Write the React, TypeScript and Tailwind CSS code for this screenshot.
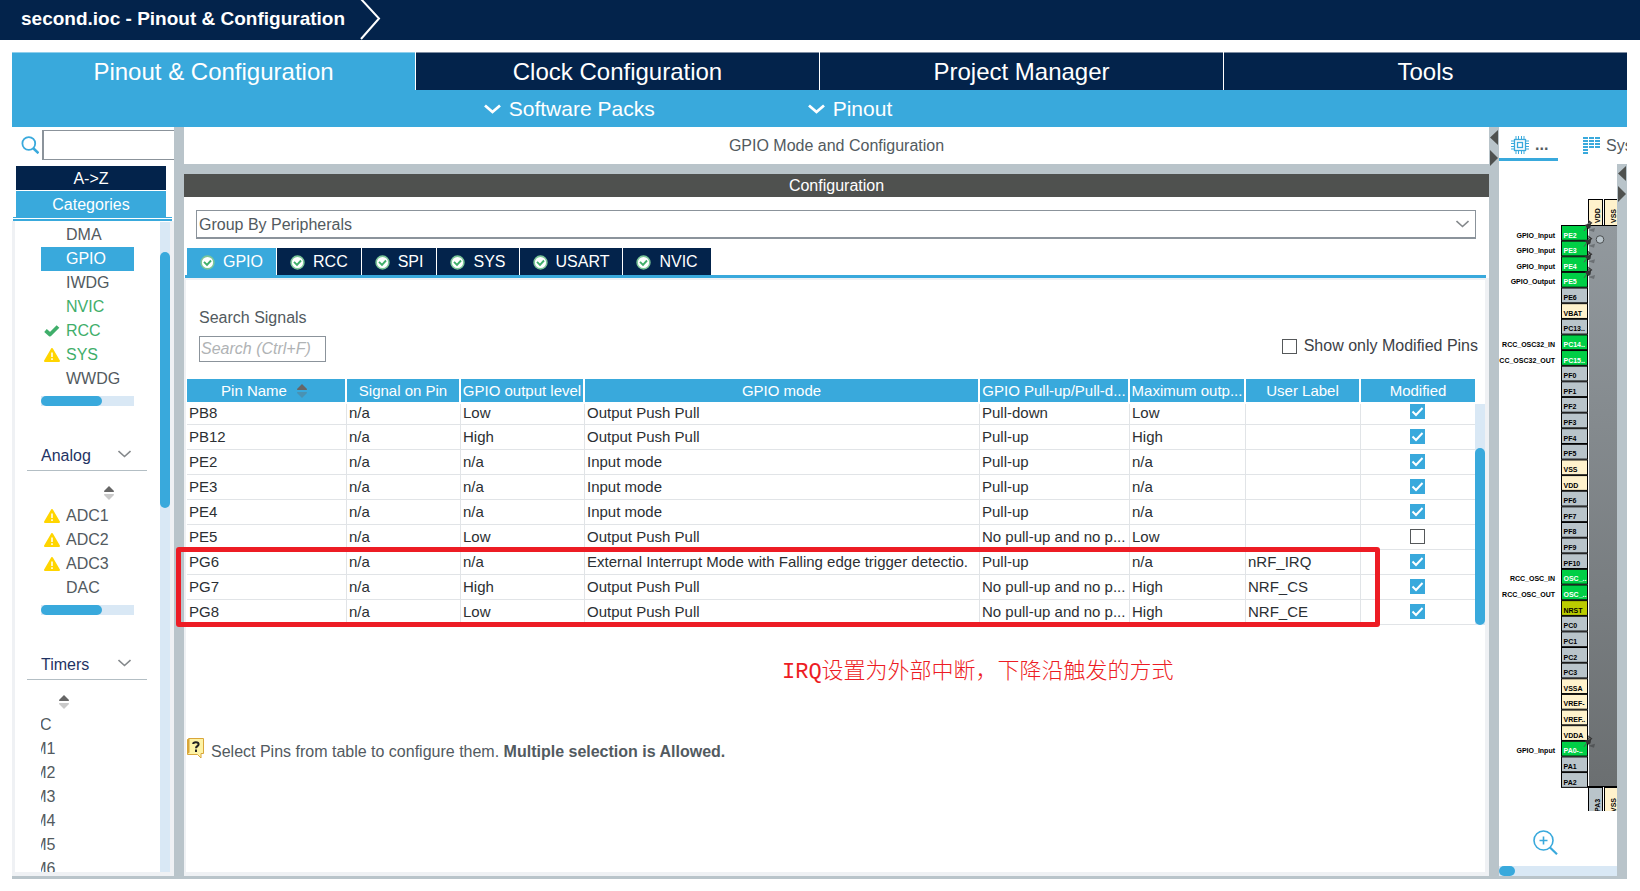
import React from 'react';

type Status = 'ok' | 'warn' | null;

interface Peripheral {
  name: string;
  status?: Status;
  color?: string;
  selected?: boolean;
}

const systemCore: Peripheral[] = [
  { name: 'DMA' },
  { name: 'GPIO', selected: true },
  { name: 'IWDG' },
  { name: 'NVIC', color: 'text-[#3fae6a]' },
  { name: 'RCC', status: 'ok', color: 'text-[#3fae6a]' },
  { name: 'SYS', status: 'warn', color: 'text-[#3fae6a]' },
  { name: 'WWDG' },
];

const analog: Peripheral[] = [
  { name: 'ADC1', status: 'warn' },
  { name: 'ADC2', status: 'warn' },
  { name: 'ADC3', status: 'warn' },
  { name: 'DAC' },
];

const timers = ['RTC', 'TIM1', 'TIM2', 'TIM3', 'TIM4', 'TIM5', 'TIM6'];

const mainTabs = ['Pinout & Configuration', 'Clock Configuration', 'Project Manager', 'Tools'];

const groupTabs = ['GPIO', 'RCC', 'SPI', 'SYS', 'USART', 'NVIC'];

const columns = [
  { title: 'Pin Name', width: 'w-[160px]' },
  { title: 'Signal on Pin', width: 'w-[114px]' },
  { title: 'GPIO output level', width: 'w-[124px]' },
  { title: 'GPIO mode', width: '' },
  { title: 'GPIO Pull-up/Pull-d...', width: 'w-[150px]' },
  { title: 'Maximum outp...', width: 'w-[116px]' },
  { title: 'User Label', width: 'w-[115px]' },
  { title: 'Modified', width: 'w-[114px]' },
];

const rows = [
  { cells: ['PB8', 'n/a', 'Low', 'Output Push Pull', 'Pull-down', 'Low', ''], modified: true },
  { cells: ['PB12', 'n/a', 'High', 'Output Push Pull', 'Pull-up', 'High', ''], modified: true },
  { cells: ['PE2', 'n/a', 'n/a', 'Input mode', 'Pull-up', 'n/a', ''], modified: true },
  { cells: ['PE3', 'n/a', 'n/a', 'Input mode', 'Pull-up', 'n/a', ''], modified: true },
  { cells: ['PE4', 'n/a', 'n/a', 'Input mode', 'Pull-up', 'n/a', ''], modified: true },
  { cells: ['PE5', 'n/a', 'Low', 'Output Push Pull', 'No pull-up and no p...', 'Low', ''], modified: false },
  {
    cells: ['PG6', 'n/a', 'n/a', 'External Interrupt Mode with Falling edge trigger detectio.', 'Pull-up', 'n/a', 'nRF_IRQ'],
    modified: true,
  },
  { cells: ['PG7', 'n/a', 'High', 'Output Push Pull', 'No pull-up and no p...', 'High', 'NRF_CS'], modified: true },
  { cells: ['PG8', 'n/a', 'Low', 'Output Push Pull', 'No pull-up and no p...', 'High', 'NRF_CE'], modified: true },
];

const GREEN = '#00cf46';
const GRAY = '#b9c4ca';
const CREAM = '#fff2cc';
const OLIVE = '#bbcc00';

// [name, fill, signal, pinned]
const pins: [string, string, string?, boolean?][] = [
  ['PE2', GREEN, 'GPIO_Input', true],
  ['PE3', GREEN, 'GPIO_Input', true],
  ['PE4', GREEN, 'GPIO_Input', true],
  ['PE5', GREEN, 'GPIO_Output', true],
  ['PE6', GRAY],
  ['VBAT', CREAM],
  ['PC13..', GRAY],
  ['PC14..', GREEN, 'RCC_OSC32_IN'],
  ['PC15..', GREEN, 'CC_OSC32_OUT'],
  ['PF0', GRAY],
  ['PF1', GRAY],
  ['PF2', GRAY],
  ['PF3', GRAY],
  ['PF4', GRAY],
  ['PF5', GRAY],
  ['VSS', CREAM],
  ['VDD', CREAM],
  ['PF6', GRAY],
  ['PF7', GRAY],
  ['PF8', GRAY],
  ['PF9', GRAY],
  ['PF10', GRAY],
  ['OSC_..', GREEN, 'RCC_OSC_IN'],
  ['OSC_..', GREEN, 'RCC_OSC_OUT'],
  ['NRST', OLIVE],
  ['PC0', GRAY],
  ['PC1', GRAY],
  ['PC2', GRAY],
  ['PC3', GRAY],
  ['VSSA', CREAM],
  ['VREF-', CREAM],
  ['VREF..', CREAM],
  ['VDDA', CREAM],
  ['PA0-..', GREEN, 'GPIO_Input', true],
  ['PA1', GRAY],
  ['PA2', GRAY],
];

const CheckIcon = () => (
  <svg width="16" height="12" viewBox="0 0 16 12" fill="none" aria-hidden="true">
    <path d="M1.5 5.5L6 9.5L14 1.5" stroke="#3fae6a" strokeWidth="3.8" strokeLinejoin="round" />
  </svg>
);

const WarnIcon = () => (
  <svg width="16" height="14" viewBox="0 0 16 14" aria-hidden="true">
    <path d="M8 1L15 13H1Z" fill="#ffd500" stroke="#ffd500" strokeWidth="2" strokeLinejoin="round" />
    <path d="M8 4.5V9M8 10.3V12" stroke="#fff" strokeWidth="1.5" />
  </svg>
);

const SortIcon = () => (
  <svg width="10" height="14" viewBox="0 0 10 14" aria-hidden="true">
    <path d="M0 6L0.5 4.5L5 0L9.5 4.5L10 6Z" fill="#666" />
    <path d="M0 8H10L9.5 9.5L5 14L0.5 9.5Z" fill="#666" opacity="0.35" />
  </svg>
);

const ThinChevron = () => (
  <svg width="13" height="8" viewBox="0 0 13 8" fill="none" aria-hidden="true">
    <path d="M0.5 1L6.5 6.5L12.5 1" stroke="#85898c" strokeWidth="1.6" />
  </svg>
);

const BoldChevron = () => (
  <svg width="17" height="10" viewBox="0 0 17 10" fill="none" aria-hidden="true">
    <path d="M1 1.5L8.5 8L16 1.5" stroke="#fff" strokeWidth="2.8" />
  </svg>
);

const TabCheck = () => (
  <svg width="15" height="15" viewBox="0 0 15 15" fill="none" aria-hidden="true">
    <circle cx="7.5" cy="7.5" r="6.4" fill="#fff" stroke="#7cc698" strokeWidth="1.6" />
    <path d="M4 6.8L7 9.8L11 5.5" stroke="#3fae6a" strokeWidth="1.9" />
  </svg>
);

const SplitArrows = () => (
  <svg width="10" height="36" viewBox="0 0 10 36" fill="#4f514f" aria-hidden="true">
    <path d="M9 0V15L1 7.5Z" />
    <path d="M1 20V36L9 28Z" />
  </svg>
);

const PeripheralRow: React.FC<{ item: Peripheral }> = ({ item }) => (
  <li>
    <button
      className={`flex h-6 w-full items-center text-left text-base leading-6 ${
        item.selected ? 'bg-[#39a9dc] text-white' : item.color ?? 'text-[#525a60]'
      }`}
    >
      <span className="flex w-[25px] shrink-0 justify-center pr-1">
        {item.status === 'ok' && <CheckIcon />}
        {item.status === 'warn' && <WarnIcon />}
      </span>
      <span>{item.name}</span>
    </button>
  </li>
);

const HScroll = () => (
  <div className="h-[10px] w-full bg-[#d9e8f5]">
    <div className="h-full w-[61px] rounded-full bg-[#39a9dc]" />
  </div>
);

const SectionHeader: React.FC<{ title: string }> = ({ title }) => (
  <button className="mt-10 ml-3 flex h-[25px] w-[120px] items-start justify-between border-b border-[#b3bec4] pr-4 pl-[14px] text-left text-base leading-5 text-[#1f3364]">
    <span>{title}</span>
    <span className="pt-1">
      <ThinChevron />
    </span>
  </button>
);

const Checkbox: React.FC<{ id: string; checked: boolean; label?: string }> = ({ id, checked, label }) => (
  <span className="relative block h-[15px] w-[15px]">
    <input
      id={id}
      type="checkbox"
      defaultChecked={checked}
      aria-label={label}
      className="peer block h-[15px] w-[15px] appearance-none border border-[#55585a] bg-white checked:border-0 checked:bg-[#39a9dc]"
    />
    <svg
      viewBox="0 0 15 15"
      fill="none"
      aria-hidden="true"
      className="pointer-events-none absolute inset-0 hidden h-[15px] w-[15px] peer-checked:block"
    >
      <path d="M2.5 7.5L6 11L12.5 4" stroke="#fff" strokeWidth="2" />
    </svg>
  </span>
);

const Sidebar = () => (
  <aside className="flex w-[162px] shrink-0 flex-col overflow-hidden">
    <div className="flex shrink-0 items-center gap-[3px] pt-[3px] pl-[9px]">
      <svg width="18" height="18" viewBox="0 0 18 18" fill="none" stroke="#39a9dc" aria-hidden="true">
        <circle cx="7.8" cy="7.5" r="6.4" strokeWidth="1.8" />
        <path d="M12.3 12.3L17.5 17.2" strokeWidth="2.6" />
      </svg>
      <input
        aria-label="Search peripherals"
        className="h-[30px] min-w-0 flex-1 border-y border-l-2 border-[#8b939b] bg-white px-1 text-base outline-none"
      />
    </div>
    <div className="mt-[6px] mr-2 ml-1 flex shrink-0 flex-col gap-px text-base text-white">
      <button className="h-6 bg-[#03234b] pt-[2px] leading-[22px]">A-&gt;Z</button>
      <button className="h-[26px] bg-[#39a9dc] pt-[2px] leading-6">Categories</button>
    </div>
    <div className="mr-[2px] ml-px h-1 shrink-0 border-t border-b-2 border-[#39a9dc]" />
    <div className="flex min-h-0 flex-1 overflow-hidden border-r-4 border-b-4 border-l-[3px] border-[#eff1f4]">
      <div className="min-w-0 flex-1 pt-[2px]">
        <div className="ml-[26px] w-[93px]">
          <ul>
            {systemCore.map((item) => (
              <PeripheralRow key={item.name} item={item} />
            ))}
          </ul>
          <div className="mt-[5px]">
            <HScroll />
          </div>
        </div>

        <SectionHeader title="Analog" />
        <div className="mt-[15px] ml-[26px] w-[93px]">
          <div className="flex h-[18px] items-start pl-[63px]">
            <SortIcon />
          </div>
          <ul>
            {analog.map((item) => (
              <PeripheralRow key={item.name} item={item} />
            ))}
          </ul>
          <div className="mt-[5px]">
            <HScroll />
          </div>
        </div>

        <SectionHeader title="Timers" />
        <div className="mt-[15px] ml-[26px] w-[93px]">
          <div className="flex h-[18px] items-start pl-[18px]">
            <SortIcon />
          </div>
          {/* this list is scrolled to the right */}
          <ul className="overflow-hidden text-base leading-6 text-[#525a60]">
            {timers.map((name) => (
              <li key={name} className="-ml-[22px]">
                {name}
              </li>
            ))}
          </ul>
        </div>
      </div>
      <div className="mt-px w-[10px] shrink-0 bg-[#d9e8f5] pt-[30px]">
        <div className="h-[256px] rounded-full bg-[#39a9dc]" />
      </div>
    </div>
  </aside>
);

const PinTable = () => (
  <div className="relative mt-[17px] flex pl-px">
    <table className="min-w-0 flex-1 table-fixed border-separate border-spacing-0 text-[15px] leading-5 text-[#2b2f33]">
      <thead>
        <tr>
          {columns.map((col, i) => (
            <th
              key={col.title}
              className={`h-[25px] overflow-hidden border-b-2 border-white bg-[#39a9dc] bg-clip-padding p-0 font-normal whitespace-nowrap text-white ${
                col.width
              } ${i < columns.length - 1 ? 'border-r-2' : ''}`}
            >
              {i === 0 ? (
                <span className="flex items-center justify-center gap-[10px] pr-1">
                  {col.title}
                  <SortIcon />
                </span>
              ) : (
                col.title
              )}
            </th>
          ))}
        </tr>
      </thead>
      <tbody>
        {rows.map((row, r) => (
          <tr key={row.cells[0]} className={r === 0 ? 'h-[21px] leading-[18px]' : 'h-[25px]'}>
            {row.cells.map((cell, c) => (
              <td
                key={c}
                className={`overflow-hidden border-r border-b border-[#e1e4e7] p-0 pl-[2px] whitespace-nowrap ${
                  r === 0 ? 'pb-[2px]' : ''
                }`}
              >
                {cell}
              </td>
            ))}
            <td className={`border-b border-[#e1e4e7] p-0 ${r === 0 ? 'pb-[5px]' : 'pb-[2px]'}`}>
              <div className="flex justify-center pr-[2px]">
                <Checkbox id={`mod-${row.cells[0]}`} checked={row.modified} label={`${row.cells[0]} modified`} />
              </div>
            </td>
          </tr>
        ))}
      </tbody>
    </table>
    <div className="mt-[25px] w-[10px] shrink-0 bg-[#d9e8f5] pt-11">
      <div className="h-full rounded-full bg-[#39a9dc]" />
    </div>

    {/* annotations */}
    <div className="pointer-events-none absolute top-[168px] right-[105px] -left-[10px] z-10 h-20 rounded-[3px] border-[5px] border-[#ed1c24]" />
    <p className="pointer-events-none absolute top-[278px] left-[596px] font-['Liberation_Mono','Noto_Sans_CJK_SC',monospace] text-[22px] leading-8 font-light whitespace-nowrap text-[#ed1c24]">
      IRQ设置为外部中断，下降沿触发的方式
    </p>
  </div>
);

const ConfigPanel = () => (
  <main className="flex min-w-0 flex-1 flex-col">
    <h2 className="h-[37px] shrink-0 text-center text-base leading-[37px] text-[#525a60]">
      GPIO Mode and Configuration
    </h2>
    <div className="h-[10px] shrink-0 bg-[#b9c4ca]" />
    <h3 className="h-[23px] shrink-0 bg-[#4f514f] text-center text-base leading-[23px] text-white">Configuration</h3>

    <div className="relative mt-[13px] mr-[13px] ml-3 h-[29px] shrink-0">
      <select
        aria-label="Group by"
        className="h-full w-full appearance-none border border-b-2 border-[#8b939b] bg-white px-[2px] pt-px text-base text-[#525a60]"
      >
        <option>Group By Peripherals</option>
      </select>
      <span className="pointer-events-none absolute top-[10px] right-[7px]">
        <ThinChevron />
      </span>
    </div>

    <div className="mt-[9px] flex h-[27px] shrink-0 gap-px pl-[3px]">
      {groupTabs.map((tab, i) => (
        <button
          key={tab}
          className={`flex items-center gap-2 px-[13px] pt-px text-base text-white ${
            i === 0 ? 'bg-[#39a9dc]' : 'bg-[#03234b]'
          }`}
        >
          <TabCheck />
          {tab}
        </button>
      ))}
    </div>
    <div className="mr-[3px] ml-px h-[3px] shrink-0 bg-[#39a9dc]" />

    <div className="min-h-0 flex-1 border-t-2 border-r-4 border-b-4 border-l-2 border-[#eff1f4] pt-7">
      <div className="flex items-start justify-between pr-[7px] pl-[13px]">
        <div>
          <label htmlFor="signals" className="block text-base leading-5 text-[#525a60]">
            Search Signals
          </label>
          <input
            id="signals"
            placeholder="Search (Ctrl+F)"
            className="mt-2 block h-[26px] w-[127px] border border-[#8b939b] px-px text-base outline-none placeholder:text-[#b0b3b5] placeholder:italic"
          />
        </div>
        <div className="mt-7 flex h-5 items-center gap-[7px]">
          <Checkbox id="only-modified" checked={false} />
          <label htmlFor="only-modified" className="text-base leading-5 text-[#3c4146]">
            Show only Modified Pins
          </label>
        </div>
      </div>

      <PinTable />

      <div className="mt-[113px] flex items-start gap-[7px] pl-px text-base leading-5 text-[#525a60]">
        <svg width="17" height="21" viewBox="0 0 17 21" aria-hidden="true">
          <path d="M0.5 1.5L2 0.5H16.5V15.5H14V20L10.5 16.5H0.5Z" fill="#fdf3a6" stroke="#d9a63a" />
          <path d="M0.5 1.5L2.5 0.5V14.5L0.5 16Z" fill="#d9a63a" />
          <path d="M6.2 6C6.2 3.6 11.6 3.4 11.6 6.2C11.6 8.2 9 8 9 10.2M9 11.6V14" fill="none" stroke="#222" strokeWidth="2" />
        </svg>
        <p className="pt-1">
          Select Pins from table to configure them. <b>Multiple selection is Allowed.</b>
        </p>
      </div>
    </div>
  </main>
);

const PITCH = 15.63;

const PinoutDrawing = () => (
  <svg
    width="118"
    height="647"
    viewBox="0 0 118 647"
    className="block shrink-0"
    fontFamily="'Liberation Sans', Arial, sans-serif"
    fontSize="7"
    fontWeight="bold"
  >
    <defs>
      <linearGradient id="die" x1="0" y1="0" x2="0" y2="1">
        <stop offset="0" stopColor="#92999e" />
        <stop offset="1" stopColor="#6b6f71" />
      </linearGradient>
    </defs>
    {/* top and bottom pins */}
    <g stroke="#000">
      <rect x="89.5" y="35.5" width="14" height="26" fill={CREAM} />
      <rect x="105.5" y="35.5" width="14" height="26" fill={CREAM} />
      <rect x="89.5" y="623.5" width="14" height="30" fill={GRAY} />
      <rect x="105.5" y="623.5" width="14" height="30" fill={CREAM} />
    </g>
    <text transform="translate(101 59) rotate(-90)">VDD</text>
    <text transform="translate(117 59) rotate(-90)">VSS</text>
    <text transform="translate(101 648) rotate(-90)">PA3</text>
    <text transform="translate(117 648) rotate(-90)">VSS</text>
    {/* package */}
    <rect x="90" y="62" width="28" height="560" fill="url(#die)" />
    <path d="M88 61.5H118M88 622.5H118" stroke="#000" />
    <circle cx="101" cy="75.5" r="3.8" fill={GRAY} stroke="#4c5052" />
    {pins.map(([name, fill, signal], i) => {
      const y = 61.5 + i * PITCH;
      return (
        <g key={i}>
          <rect x="62.5" y={y} width="26" height="14.8" fill={fill} stroke="#000" />
          <text x="64.5" y={y + 12} fill={fill === GREEN ? '#fff' : '#000'}>
            {name}
          </text>
          {signal && (
            <text x="56" y={y + 12} textAnchor="end">
              {signal}
            </text>
          )}
        </g>
      );
    })}
    {pins.map(([, , , pinned], i) =>
      pinned ? (
        <g key={i} transform={`translate(84 ${55 + i * PITCH})`}>
          <path d="M5 11L11 13L12 9Z" fill="#000" opacity="0.25" />
          <path d="M1 12L4 8" stroke="#555" />
          <path d="M5 0.5L9.5 4L8 5L7.5 8.5L5.5 10L1.5 6L4.5 5L5.5 3Z" fill="#333" />
          <path d="M5.5 5L7 3.5" stroke="#999" />
        </g>
      ) : null
    )}
  </svg>
);

const PinoutPanel = () => (
  <aside className="flex w-[128px] shrink-0 flex-col overflow-hidden">
    <div className="flex h-[37px] shrink-0 text-base whitespace-nowrap text-[#525a60]">
      <button className="mb-[3px] flex w-[59px] shrink-0 items-center gap-[6px] border-b-[3px] border-[#39a9dc] pt-1 pl-3 font-bold">
        <svg width="18" height="18" viewBox="0 0 18 18" fill="none" stroke="#39a9dc" className="shrink-0" aria-hidden="true">
          <rect x="3.5" y="3.5" width="11" height="11" strokeWidth="1.3" />
          <rect x="6.5" y="6.5" width="5" height="5" strokeWidth="1.3" />
          <path d="M5 0V3M7.5 0V3M10.5 0V3M13 0V3M5 15V18M7.5 15V18M10.5 15V18M13 15V18M0 5H3M0 7.5H3M0 10.5H3M0 13H3M15 5H18M15 7.5H18M15 10.5H18M15 13H18" />
        </svg>
        ...
      </button>
      <button className="flex items-center gap-[6px] pl-[25px]">
        <svg width="17" height="17" viewBox="0 0 17 17" stroke="#39a9dc" strokeWidth="2" className="shrink-0" aria-hidden="true">
          <path d="M0 1H5M0 4H5M0 7H5M0 10H5M0 13H5M0 16H5M6 1H11M6 4H11M6 7H11M6 10H11M12 1H17M12 4H17M12 7H17M12 10H17" />
        </svg>
        System view
      </button>
    </div>
    <div className="flex min-h-0 flex-1">
      <div className="flex min-w-0 flex-1 flex-col">
        <div className="min-h-0 flex-1 overflow-hidden">
          <PinoutDrawing />
          <button aria-label="Zoom in" className="mt-[19px] ml-[34px] block">
            <svg width="25" height="25" viewBox="0 0 25 25" fill="none" stroke="#39a9dc" aria-hidden="true">
              <circle cx="10.5" cy="10.5" r="9.5" strokeWidth="1.6" />
              <path d="M17 17.5L24 24.2" strokeWidth="2.2" />
              <path d="M10.5 6.5V14.5M6.5 10.5H14.5" strokeWidth="1.6" />
            </svg>
          </button>
        </div>
        <div className="h-[10px] shrink-0 bg-[#d9e8f5]">
          <div className="h-full w-4 rounded-full bg-[#39a9dc]" />
        </div>
      </div>
      <div className="w-[10px] shrink-0 bg-[#b9c4ca] pt-[2px]">
        <SplitArrows />
      </div>
    </div>
  </aside>
);

export default function App() {
  return (
    <div className="flex h-screen flex-col overflow-hidden bg-white font-['Liberation_Sans',Arial,sans-serif]">
      <header className="flex h-10 shrink-0 items-stretch bg-[#03234b] pl-[21px]">
        <h1 className="text-[19px] leading-[38px] font-bold whitespace-nowrap text-white">
          second.ioc - Pinout &amp; Configuration
        </h1>
        <svg width="21" height="40" viewBox="0 0 21 40" fill="none" className="ml-[15px]" aria-hidden="true">
          <path d="M1 -1L19 18.5L1 39" stroke="#fff" strokeWidth="2" />
        </svg>
      </header>

      <div className="mt-3 mr-[13px] mb-3 ml-3 flex min-h-0 flex-1 flex-col">
        <nav className="grid h-[38px] shrink-0 grid-cols-4 gap-px">
          {mainTabs.map((tab, i) => (
            <button
              key={tab}
              className={`border-t text-2xl leading-9 text-white ${
                i === 0 ? 'border-[#8fcfec] bg-[#39a9dc]' : 'border-[#7e8da2] bg-[#03234b]'
              }`}
            >
              {tab}
            </button>
          ))}
        </nav>
        <div className="flex h-[37px] shrink-0 items-center justify-center gap-[153px] bg-[#39a9dc] pr-[263px] text-[21px] text-white">
          <button className="flex items-center gap-2">
            <BoldChevron />
            Software Packs
          </button>
          <button className="flex items-center gap-2">
            <BoldChevron />
            Pinout
          </button>
        </div>

        <div className="flex min-h-0 flex-1 border-b-[3px] border-[#b9c4ca]">
          <Sidebar />
          <div className="w-[10px] shrink-0 bg-[#b9c4ca]" />
          <ConfigPanel />
          <div className="w-[10px] shrink-0 bg-[#b9c4ca] pt-[3px]">
            <SplitArrows />
          </div>
          <PinoutPanel />
        </div>
      </div>
    </div>
  );
}
